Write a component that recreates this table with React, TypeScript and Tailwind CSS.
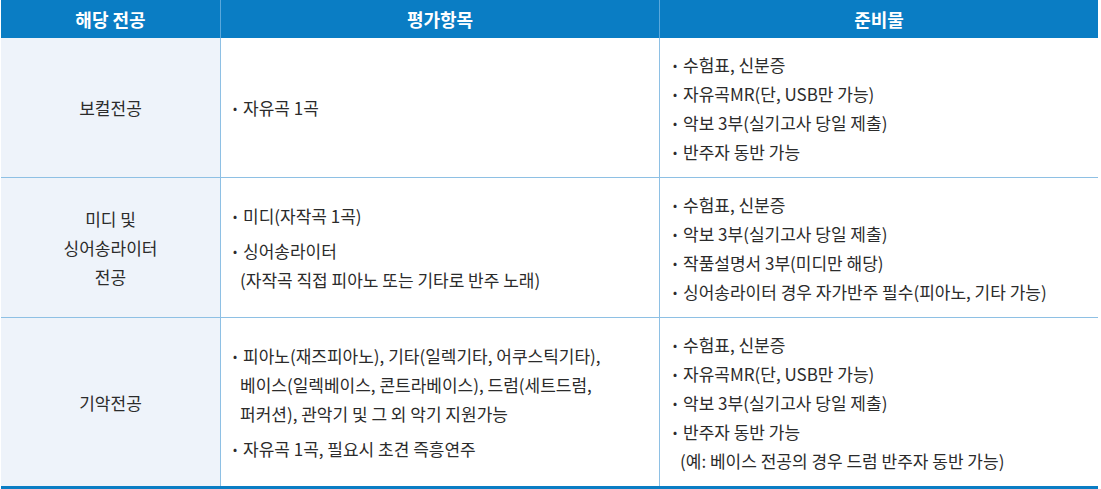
import React from "react";

type Item = { text: string; cont?: string[] };

const Bullet = ({ item }: { item: Item }) => (
  <div className="flex flex-col">
    <div className="flex">
      <span className="w-[10px] shrink-0 text-[12px] leading-[29px]">•</span>
      <span>{item.text}</span>
    </div>
    {item.cont?.map((c, i) => (
      <div key={i} className="pl-[7px]">
        {c}
      </div>
    ))}
  </div>
);

const Col2 = ({ items }: { items: Item[] }) => (
  <div className="flex flex-col gap-[6px]">
    {items.map((it, i) => (
      <Bullet key={i} item={it} />
    ))}
  </div>
);

const Col3 = ({ items }: { items: Item[] }) => (
  <div className="flex flex-col">
    {items.map((it, i) => (
      <Bullet key={i} item={it} />
    ))}
  </div>
);

const rows: { name: string[]; eval: Item[]; prep: Item[]; h: string; last?: boolean }[] = [
  {
    name: ["보컬전공"],
    eval: [{ text: "자유곡 1곡" }],
    prep: [
      { text: "수험표, 신분증" },
      { text: "자유곡MR(단, USB만 가능)" },
      { text: "악보 3부(실기고사 당일 제출)" },
      { text: "반주자 동반 가능" },
    ],
    h: "h-[140px]",
  },
  {
    name: ["미디 및", "싱어송라이터", "전공"],
    eval: [
      { text: "미디(자작곡 1곡)" },
      { text: "싱어송라이터", cont: ["(자작곡 직접 피아노 또는 기타로 반주 노래)"] },
    ],
    prep: [
      { text: "수험표, 신분증" },
      { text: "악보 3부(실기고사 당일 제출)" },
      { text: "작품설명서 3부(미디만 해당)" },
      { text: "싱어송라이터 경우 자가반주 필수(피아노, 기타 가능)" },
    ],
    h: "h-[140px]",
  },
  {
    name: ["기악전공"],
    eval: [
      {
        text: "피아노(재즈피아노), 기타(일렉기타, 어쿠스틱기타),",
        cont: ["베이스(일렉베이스, 콘트라베이스), 드럼(세트드럼,", "퍼커션), 관악기 및 그 외 악기 지원가능"],
      },
      { text: "자유곡 1곡, 필요시 초견 즉흥연주" },
    ],
    prep: [
      { text: "수험표, 신분증" },
      { text: "자유곡MR(단, USB만 가능)" },
      { text: "악보 3부(실기고사 당일 제출)" },
      { text: "반주자 동반 가능", cont: ["(예: 베이스 전공의 경우 드럼 반주자 동반 가능)"] },
    ],
    h: "h-[171px]",
    last: true,
  },
];

export default function App() {
  return (
    <div
      className="w-[1101px] h-[489px] bg-white pl-[1px]"
      style={{ fontFamily: '"Noto Sans CJK KR", "Noto Sans", sans-serif' }}
    >
      <div className="w-[1097px] text-[17px] leading-[29px] text-[#2b2b2b]">
        <div className="grid grid-cols-[220px_439px_1fr] h-[38px] bg-[#0a7dc4] text-white font-bold text-[18px]">
          <div className="flex items-center justify-center border-r border-[#5aa8dc]">해당 전공</div>
          <div className="flex items-center justify-center border-r border-[#5aa8dc]">평가항목</div>
          <div className="flex items-center justify-center">준비물</div>
        </div>
        {rows.map((r, i) => (
          <div
            key={i}
            className={`grid grid-cols-[220px_439px_1fr] ${r.h} ${
              r.last ? "border-b-[3px] border-[#0a7dc4]" : "border-b border-[#8ec0e4]"
            }`}
          >
            <div className="flex flex-col items-center justify-center bg-[#eef3fa] border-r border-[#8ec0e4] text-center">
              {r.name.map((n, j) => (
                <div key={j}>{n}</div>
              ))}
            </div>
            <div className="flex items-center border-r border-[#8ec0e4] pl-[12px]">
              <Col2 items={r.eval} />
            </div>
            <div className="flex items-center pl-[13px]">
              <Col3 items={r.prep} />
            </div>
          </div>
        ))}
      </div>
    </div>
  );
}
